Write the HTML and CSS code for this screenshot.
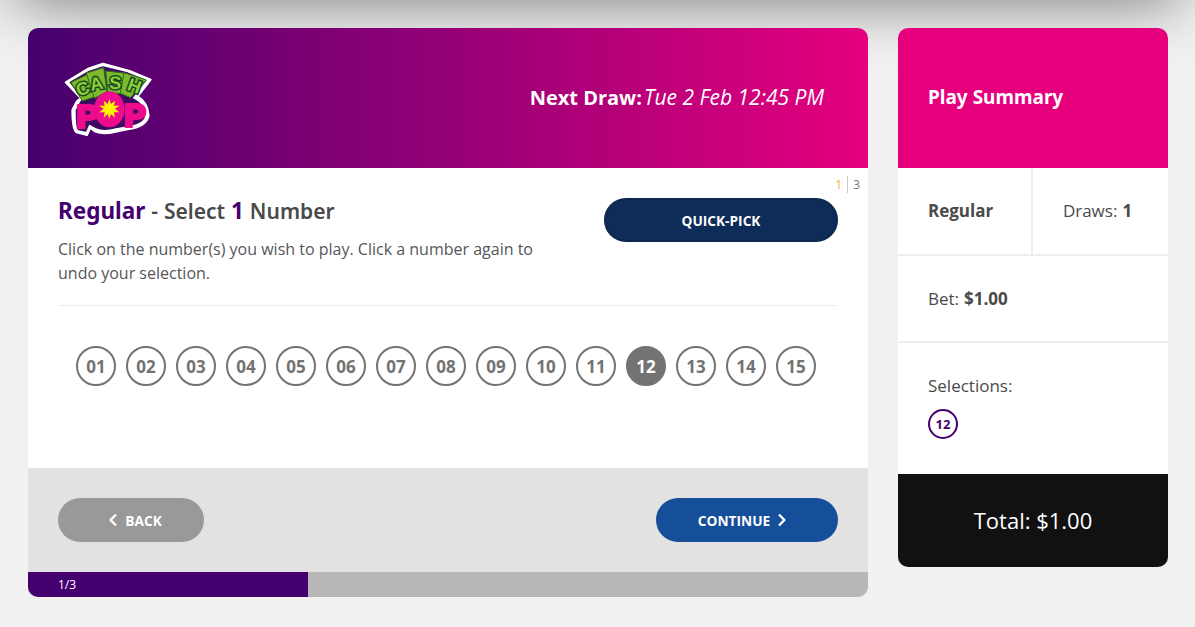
FILE: index.html
```html
<!DOCTYPE html>
<html lang="en">
<head>
<meta charset="utf-8">
<title>Cash Pop</title>
<link rel="stylesheet" href="styles.css">
</head>
<body>
<div class="topbar"></div>
<main class="layout">
  <section class="game">
    <header class="game-head">
      <svg class="logo" width="90" height="76" viewBox="68 58 270 228" aria-label="Cash Pop logo">
        <path class="logo-edge" d="M76 122 L145 80 L188 66 L268 88 L331 114 L292 164 Q322 182 325 222 Q318 256 262 263 L226 270 Q190 280 165 270 L150 258 L140 280 L108 272 Q96 262 96 205 L110 178 L122 170 Z"/>
        <path class="logo-dark" d="M90 122 L145 90 L188 76 L262 94 L316 116 L274 170 Q312 186 313 222 Q308 246 260 252 L226 258 Q190 268 168 258 L146 246 L136 268 L114 264 Q108 256 108 206 L122 180 L128 172 Z"/>
        <g class="bill">
          <path d="M92 122 L146 96 L168 164 L126 178 Z"/>
          <path d="M138 94 L190 78 L200 150 L162 170 Z"/>
          <path d="M196 88 L251 94 L245 156 L203 153 Z"/>
          <path d="M251 93 L318 115 L270 168 L240 155 Z"/>
        </g>
        <g class="logo-cash">
          <text x="134" y="158" transform="rotate(-22 134 158)">C</text>
          <text x="172" y="144" transform="rotate(-12 172 144)">A</text>
          <text x="224" y="142" transform="rotate(2 224 142)">S</text>
          <text x="276" y="150" transform="rotate(20 276 150)">H</text>
        </g>
        <g class="logo-pop">
          <text class="pop-p" x="140" y="258">P</text>
          <text class="pop-p" x="283" y="256">P</text>
        </g>
        <ellipse class="logo-pink" cx="207" cy="203" rx="46" ry="54"/>
        <path class="logo-star" d="M207 172 L212 187 L224 177 L221 192 L238 192 L224 201 L237 212 L221 212 L224 228 L212 217 L207 231 L202 217 L190 228 L193 212 L177 212 L190 201 L176 192 L193 192 L190 177 L202 187 Z"/>
      </svg>
      <p class="next-draw"><b>Next Draw:</b><i>Tue 2 Feb 12:45 PM</i></p>
    </header>

    <div class="game-body">
      <div class="pager"><span class="pager-cur">1</span><span class="pager-total">3</span></div>
      <div class="intro">
        <div class="intro-text">
          <h1 class="title"><span class="accent">Regular</span> - Select <span class="accent">1</span> Number</h1>
          <p class="help">Click on the number(s) you wish to play. Click a number again to undo your selection.</p>
        </div>
        <button class="btn btn-quick" type="button">QUICK-PICK</button>
      </div>
      <div class="balls">
        <span class="ball">01</span><span class="ball">02</span><span class="ball">03</span><span class="ball">04</span><span class="ball">05</span><span class="ball">06</span><span class="ball">07</span><span class="ball">08</span><span class="ball">09</span><span class="ball">10</span><span class="ball">11</span><span class="ball ball-on">12</span><span class="ball">13</span><span class="ball">14</span><span class="ball">15</span>
      </div>
    </div>

    <div class="game-foot">
      <button class="btn btn-back" type="button">
        <svg class="chev" width="8" height="14" viewBox="0 0 8 14"><path d="M7 1.5 L1.6 7 L7 12.5"/></svg>
        BACK
      </button>
      <button class="btn btn-next" type="button">
        CONTINUE
        <svg class="chev" width="8" height="14" viewBox="0 0 8 14"><path d="M1 1.5 L6.4 7 L1 12.5"/></svg>
      </button>
    </div>

    <div class="progress"><div class="progress-fill">1/3</div></div>
  </section>

  <aside class="summary">
    <h2 class="summary-head">Play Summary</h2>
    <div class="sum-row sum-split">
      <div class="sum-type"><b>Regular</b></div>
      <div class="sum-draws">Draws: <b>1</b></div>
    </div>
    <div class="sum-row sum-bet">Bet: <b>$1.00</b></div>
    <div class="sum-sel">
      <div>Selections:</div>
      <span class="mini-ball">12</span>
    </div>
    <div class="sum-total">Total: $1.00</div>
  </aside>
</main>
</body>
</html>
```
FILE: styles.css
```css
* { box-sizing: border-box; }
html, body { margin: 0; height: 100%; }
body {
  background: #f1f1f1;
  font-family: "Open Sans", "Liberation Sans", sans-serif;
  color: #4a4a4a;
  overflow: hidden;
}
.topbar {
  height: 60px;
  margin: -60px 15px 0;
  box-shadow: 0 0 62px 0 rgba(0, 0, 0, 0.54);
}
.layout {
  display: flex;
  align-items: flex-start;
  gap: 30px;
  padding: 28px 27px 0 28px;
}
.game {
  width: 840px;
  flex: none;
  border-radius: 10px;
  overflow: hidden;
  background: #fff;
}
.game-head {
  height: 140px;
  display: flex;
  align-items: center;
  justify-content: space-between;
  padding: 0 44px 0 35px;
  background: linear-gradient(90deg, #44006e 0%, #e6007e 100%);
}
.logo { display: block; margin-top: 1px; }
.logo-edge { fill: #fff; stroke: #fff; stroke-width: 6; stroke-linejoin: round; }
.logo-dark { fill: #3f0a63; stroke: #3f0a63; stroke-width: 4; stroke-linejoin: round; }
.bill path { fill: #7dbb2d; stroke: #2f6a1e; stroke-width: 3; stroke-linejoin: round; }
.logo-cash text {
  font-family: "Liberation Sans", sans-serif;
  font-size: 54px;
  font-weight: 700;
  fill: #8fcf35;
  stroke: #174a22;
  stroke-width: 9;
  paint-order: stroke;
  text-anchor: middle;
}
.logo-pop text {
  font-family: "DejaVu Sans", sans-serif;
  font-weight: 700;
  fill: #ec0c8c;
  stroke: #ec0c8c;
  stroke-width: 6;
  stroke-linejoin: round;
  text-anchor: middle;
}
.pop-p { font-size: 98px; }
.logo-pink { fill: #ec0c8c; }
.logo-star { fill: #fff200; }
.next-draw {
  display: flex;
  align-items: baseline;
  gap: 2px;
  margin: -2px 0 0;
  color: #fff;
  font-size: 20px;
  line-height: 28px;
}
.next-draw b { font-weight: 700; }
.next-draw i { font-weight: 400; font-size: 21px; }
.game-body {
  position: relative;
  height: 300px;
  padding: 30px 30px 0;
}
.pager {
  position: absolute;
  top: 8px;
  right: 8px;
  display: flex;
  font-size: 12px;
  line-height: 17px;
}
.pager-cur { color: #f7b52c; padding-right: 5px; border-right: 1px solid #ccc; }
.pager-total { color: #777; padding-left: 5px; }
.intro {
  display: flex;
  justify-content: space-between;
  align-items: flex-start;
  height: 108px;
  width: 779px;
  border-bottom: 1px solid #ececec;
}
.intro-text { width: 500px; }
.title {
  margin: 0 0 13px;
  font-family: "Noto Sans", "Open Sans", sans-serif;
  font-size: 21px;
  line-height: 25px;
  font-weight: 600;
  word-spacing: 0.5px;
  color: #4a4a4a;
}
.accent { color: #44006e; font-size: 22.5px; font-weight: 700; }
.help {
  margin: 0;
  font-size: 16px;
  line-height: 24px;
  color: #55565a;
}
.btn {
  display: flex;
  align-items: center;
  justify-content: center;
  height: 44px;
  border: 0;
  border-radius: 22px;
  color: #fff;
  font-family: "Open Sans", sans-serif;
  font-size: 13.7px;
  font-weight: 700;
}
.btn-quick {
  width: 234px;
  flex: none;
  margin-right: -1px;
  background: #0e2c58;
  box-shadow: inset 0 0 3px rgba(0, 0, 0, 0.35);
}
.balls {
  display: flex;
  gap: 10px;
  padding: 40px 0 0 18px;
}
.ball {
  width: 40px;
  height: 40px;
  display: flex;
  align-items: center;
  justify-content: center;
  border: 2px solid #737373;
  border-radius: 50%;
  background: #fff;
  color: #737373;
  font-size: 17px;
  font-weight: 700;
}
.ball-on { background: #737373; color: #fff; }
.game-foot {
  height: 104px;
  display: flex;
  justify-content: space-between;
  align-items: center;
  padding: 0 30px;
  background: #e2e2e2;
}
.btn-back { width: 146px; gap: 8px; padding-left: 15px; background: #999; }
.btn-next { width: 182px; gap: 8px; padding-right: 16px; background: #164f99; }
.chev { fill: none; stroke: #fff; stroke-width: 2.4; }
.progress { height: 25px; background: #b8b6b6; }
.progress-fill {
  width: 280px;
  height: 25px;
  padding-left: 30px;
  background: #44006e;
  color: #fff;
  font-size: 12px;
  line-height: 25px;
}
.summary {
  width: 270px;
  flex: none;
  border-radius: 10px;
  overflow: hidden;
  background: #fff;
}
.summary-head {
  height: 140px;
  margin: 0;
  padding: 0 0 2px 30px;
  display: flex;
  align-items: center;
  background: #e6007e;
  color: #fff;
  font-family: "Noto Sans", "Open Sans", sans-serif;
  font-size: 19px;
  font-weight: 700;
}
.sum-row {
  font-size: 17px;
  border-bottom: 2px solid #eeeeee;
}
.sum-split {
  height: 88px;
  display: flex;
}
.sum-type {
  width: 135px;
  padding: 0 0 2px 30px;
  display: flex;
  align-items: center;
  border-right: 2px solid #eeeeee;
}
.sum-draws {
  flex: 1;
  display: flex;
  align-items: center;
  justify-content: center;
  gap: 5px;
  padding: 0 6px 2px 0;
}
.sum-bet {
  height: 87px;
  display: flex;
  align-items: center;
  gap: 5px;
  padding-left: 30px;
}
.sum-sel {
  height: 131px;
  padding: 31px 30px 0;
  font-size: 17px;
  line-height: 24px;
}
.mini-ball {
  width: 30px;
  height: 30px;
  margin-top: 11px;
  display: flex;
  align-items: center;
  justify-content: center;
  border: 2px solid #44006e;
  border-radius: 50%;
  color: #44006e;
  font-size: 13px;
  font-weight: 700;
}
.sum-total {
  height: 93px;
  padding-bottom: 2px;
  display: flex;
  align-items: center;
  justify-content: center;
  background: #111;
  color: #fff;
  font-size: 22px;
}
```
